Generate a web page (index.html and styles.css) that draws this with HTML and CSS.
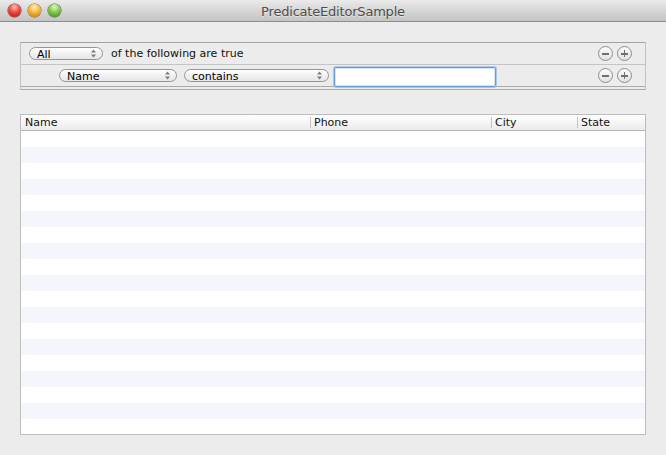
FILE: index.html
```html
<!DOCTYPE html>
<html>
<head>
<meta charset="utf-8">
<title>PredicateEditorSample</title>
<link rel="stylesheet" href="styles.css">
</head>
<body>
<div class="window">
  <div class="titlebar">
    <div class="lights">
      <span class="light red"></span>
      <span class="light yellow"></span>
      <span class="light green"></span>
    </div>
    <div class="title">PredicateEditorSample</div>
  </div>
  <div class="content">
    <div class="predicate">
      <div class="prow prow-top">
        <div class="popup popup-all"><span>All</span><svg class="arrows" width="5" height="9" viewBox="0 0 5 9"><path d="M0 3.5 L2.5 0.5 L5 3.5 Z M0 5.5 L2.5 8.5 L5 5.5 Z" fill="#7c7c7c"/></svg></div>
        <span class="label">of the following are true</span>
        <div class="rowbtns">
          <span class="rbtn minus"></span>
          <span class="rbtn plus"></span>
        </div>
      </div>
      <div class="prow prow-sub">
        <div class="popup popup-name"><span>Name</span><svg class="arrows" width="5" height="9" viewBox="0 0 5 9"><path d="M0 3.5 L2.5 0.5 L5 3.5 Z M0 5.5 L2.5 8.5 L5 5.5 Z" fill="#7c7c7c"/></svg></div>
        <div class="popup popup-op"><span>contains</span><svg class="arrows" width="5" height="9" viewBox="0 0 5 9"><path d="M0 3.5 L2.5 0.5 L5 3.5 Z M0 5.5 L2.5 8.5 L5 5.5 Z" fill="#7c7c7c"/></svg></div>
        <div class="field"></div>
        <div class="rowbtns">
          <span class="rbtn minus"></span>
          <span class="rbtn plus"></span>
        </div>
      </div>
    </div>
    <div class="table">
      <div class="thead">
        <div class="th col-name">Name</div>
        <div class="th col-phone">Phone</div>
        <div class="th col-city">City</div>
        <div class="th col-state">State</div>
      </div>
      <div class="tbody">
        <div class="tr"></div><div class="tr"></div><div class="tr"></div><div class="tr"></div>
        <div class="tr"></div><div class="tr"></div><div class="tr"></div><div class="tr"></div>
        <div class="tr"></div><div class="tr"></div><div class="tr"></div><div class="tr"></div>
        <div class="tr"></div><div class="tr"></div><div class="tr"></div><div class="tr"></div>
        <div class="tr"></div><div class="tr"></div><div class="tr"></div>
      </div>
    </div>
  </div>
</div>
</body>
</html>
```
FILE: styles.css
```css
* { box-sizing: border-box; }
html, body { margin: 0; padding: 0; }
body {
  width: 666px;
  height: 455px;
  overflow: hidden;
  background: #ececec;
  font-family: "DejaVu Sans", "Noto Sans", sans-serif;
  color: #000;
}
.window {
  width: 666px;
  height: 455px;
  background: #ececec;
  border-radius: 0 0 5px 5px;
}
.titlebar {
  height: 22px;
  background: linear-gradient(#ebebeb, #d6d6d6 50%, #c4c4c4);
  border-bottom: 1px solid #8d8d8d;
  display: flex;
  align-items: center;
  position: relative;
}
.lights {
  display: flex;
  gap: 7px;
  padding-left: 8px;
  position: absolute;
  left: 0;
  top: 4px;
}
.light {
  width: 13px;
  height: 13px;
  border-radius: 50%;
  display: block;
}
.red {
  background: radial-gradient(circle at 50% 25%, #ffc4bc 0%, #f2524a 40%, #c4231b 80%, #a81a12 100%);
  box-shadow: 0 0 0 0.5px #7e2a22;
}
.yellow {
  background: radial-gradient(circle at 50% 25%, #fff0bf 0%, #f8bd48 40%, #d48a18 80%, #b3730d 100%);
  box-shadow: 0 0 0 0.5px #8e6118;
}
.green {
  background: radial-gradient(circle at 50% 25%, #e2f8c0 0%, #8ccf55 40%, #4f9d28 80%, #3c8219 100%);
  box-shadow: 0 0 0 0.5px #3e6b22;
}
.title {
  flex: 1;
  text-align: center;
  font-size: 13px;
  color: #4d4d4d;
  text-shadow: 0 1px 0 rgba(255,255,255,0.5);
  padding-top: 1px;
  letter-spacing: -0.2px;
}
.content {
  padding: 20px 20px 0 20px;
}
.predicate {
  height: 48px;
  border: 1px solid #c3c3c3;
  border-top-color: #a2a2a2;
  border-bottom-color: #a8a8a8;
  background: #ececec;
}
.prow {
  display: flex;
  align-items: center;
  font-size: 11px;
}
.prow-top {
  height: 22px;
  border-bottom: 1px solid #c4c4c4;
  padding-left: 8px;
}
.prow-sub {
  height: 22px;
  border-bottom: 1px solid #a9a9a9;
  padding-left: 38px;
}
.popup {
  height: 13px;
  border: 1px solid #959595;
  border-radius: 7px;
  background: linear-gradient(#ffffff, #f1f1f1 50%, #e6e6e6);
  display: flex;
  align-items: center;
  padding-left: 7px;
  padding-right: 6px;
  font-size: 11px;
  line-height: 11px;
}
.popup span { flex: 1; padding-top: 1px; }
.popup-all { width: 74px; }
.popup-name { width: 118px; }
.popup-op { width: 145px; margin-left: 7px; }
.arrows {
  display: block;
  flex: none;
}
.label {
  margin-left: 8px;
  color: #111;
}
.field {
  width: 162px;
  height: 20px;
  margin-left: 5px;
  margin-top: 2px;
  background: #fff;
  border: 1px solid #6a9bd1;
  border-radius: 2px;
  box-shadow: 0 0 0 1px #a8c7ea, inset 0 0 0 1px #d5e3f3;
}
.rowbtns {
  margin-left: auto;
  margin-right: 13px;
  display: flex;
  gap: 4px;
}
.rbtn {
  display: block;
  width: 15px;
  height: 15px;
  border-radius: 50%;
  border: 1px solid #8e8e8e;
  background: linear-gradient(#fbfbfb, #e2e2e2);
  position: relative;
}
.rbtn::before, .rbtn.plus::after {
  content: "";
  position: absolute;
  background: #6f6f6f;
  left: 3px;
  top: 6px;
  width: 7px;
  height: 1.5px;
}
.rbtn.plus::after {
  left: 5.75px;
  top: 3.25px;
  width: 1.5px;
  height: 7px;
}
.table {
  margin-top: 24px;
  width: 626px;
  height: 321px;
  border: 1px solid #bdbdbd;
  background: #fff;
  display: flex;
  flex-direction: column;
}
.thead {
  height: 16px;
  display: flex;
  background: linear-gradient(#ffffff, #f3f3f3 60%, #eaeaea);
  border-bottom: 1px solid #b7b7b7;
  font-size: 11px;
  flex: none;
}
.th {
  padding-left: 4px;
  line-height: 15px;
  position: relative;
  color: #111;
}
.th + .th::before {
  content: "";
  position: absolute;
  left: 0;
  top: 2px;
  width: 1px;
  height: 11px;
  background: #c2c2c2;
}
.col-name { width: 289px; }
.col-phone { width: 181px; }
.col-city { width: 86px; }
.col-state { flex: 1; }
.tbody {
  flex: 1;
  overflow: hidden;
}
.tr {
  height: 16px;
  background: #fff;
}
.tr:nth-child(even) {
  background: #f3f6fa;
}
```
